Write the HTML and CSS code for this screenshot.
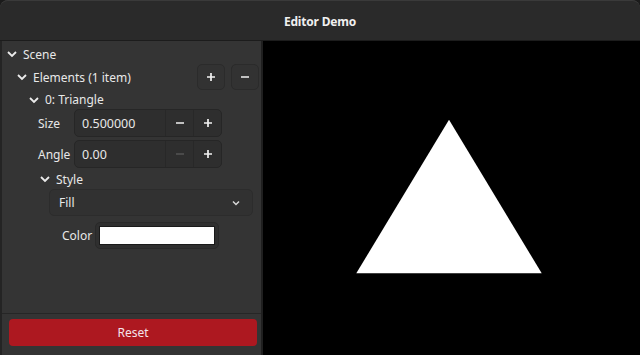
FILE: index.html
```html
<!DOCTYPE html>
<html>
<head>
<meta charset="utf-8">
<link rel="stylesheet" href="styles.css">
</head>
<body>
<div class="window">
  <header class="titlebar"><span class="title">Editor Demo</span></header>
  <main class="content">
    <aside class="sidebar">
      <div class="tree">
        <div class="row row-scene">
          <svg class="chev" viewBox="0 0 10 10"><path d="M1 3 L5 7 L9 3" /></svg>
          <span class="label">Scene</span>
        </div>
        <div class="row row-elements">
          <svg class="chev" viewBox="0 0 10 10"><path d="M1 3 L5 7 L9 3" /></svg>
          <span class="label">Elements (1 item)</span>
          <span class="spacer"></span>
          <button class="btn">
            <svg class="ic" viewBox="0 0 10 10"><path d="M5 1 V9 M1 5 H9" /></svg>
          </button>
          <button class="btn">
            <svg class="ic" viewBox="0 0 10 10"><path d="M1 5 H9" /></svg>
          </button>
        </div>
        <div class="row row-tri">
          <svg class="chev" viewBox="0 0 10 10"><path d="M1 3 L5 7 L9 3" /></svg>
          <span class="label">0: Triangle</span>
        </div>
        <div class="field row-size">
          <span class="flabel">Size</span>
          <div class="spin">
            <span class="spin-text">0.500000</span>
            <span class="spin-btn"><svg class="ic" viewBox="0 0 10 10"><path d="M1 5 H9" /></svg></span>
            <span class="spin-btn"><svg class="ic" viewBox="0 0 10 10"><path d="M5 1 V9 M1 5 H9" /></svg></span>
          </div>
        </div>
        <div class="field row-angle">
          <span class="flabel">Angle</span>
          <div class="spin">
            <span class="spin-text">0.00</span>
            <span class="spin-btn disabled"><svg class="ic" viewBox="0 0 10 10"><path d="M1 5 H9" /></svg></span>
            <span class="spin-btn"><svg class="ic" viewBox="0 0 10 10"><path d="M5 1 V9 M1 5 H9" /></svg></span>
          </div>
        </div>
        <div class="row row-style">
          <svg class="chev" viewBox="0 0 10 10"><path d="M1 3 L5 7 L9 3" /></svg>
          <span class="label">Style</span>
        </div>
        <div class="dropdown">
          <span class="dd-text">Fill</span>
          <svg class="dd-chev" viewBox="0 0 10 10"><path d="M2 3.5 L5 6.5 L8 3.5" /></svg>
        </div>
        <div class="color-row">
          <span class="flabel">Color</span>
          <div class="colorbtn"><div class="swatch"></div></div>
        </div>
      </div>
      <div class="bottom">
        <button class="reset">Reset</button>
      </div>
    </aside>
    <section class="canvas">
      <svg class="scene" viewBox="0 0 377 315">
        <polygon points="186,79 93,233 279,233" fill="#fff" />
      </svg>
    </section>
  </main>
</div>
</body>
</html>
```

FILE: styles.css
```css
html, body {
  margin: 0;
  padding: 0;
  background: #1b1b1b;
}
body {
  width: 640px;
  height: 355px;
  overflow: hidden;
  font-family: "Noto Sans", "Open Sans", sans-serif;
  font-size: 12px;
  color: #e8e8e8;
}
.window {
  width: 640px;
  height: 355px;
  display: flex;
  flex-direction: column;
  background: #282828;
  border-radius: 8px 8px 0 0;
  box-shadow: inset 0 1px 0 #3a3a3a;
  overflow: hidden;
}
.titlebar {
  height: 40px;
  flex: none;
  display: flex;
  align-items: center;
  justify-content: center;
  background: #2a2a2a;
  border-top: 1px solid #3a3a3a;
  border-radius: 8px 8px 0 0;
  box-sizing: border-box;
  padding-top: 2px;
}
.title {
  font-weight: bold;
  font-size: 12px;
  color: #f0f0f0;
  letter-spacing: -0.2px;
}
.content {
  flex: 1;
  display: flex;
  min-height: 0;
  border-top: 1px solid #1c1c1c;
}
.sidebar {
  width: 259px;
  flex: none;
  display: flex;
  flex-direction: column;
  background: #343434;
  border-left: 2px solid #242424;
  border-right: 2px solid #1f1f1f;
}
.tree {
  flex: 1;
  padding-top: 3px;
}
.row {
  display: flex;
  align-items: center;
}
.chev {
  width: 10px;
  height: 10px;
  flex: none;
  fill: none;
  stroke: #ececec;
  stroke-width: 1.8;
}
.label {
  margin-left: 6px;
}
.row-scene { height: 20px; padding-left: 5px; }
.row-elements { height: 26px; padding-left: 15px; }
.row-tri { height: 19px; padding-left: 27px; }
.row-style { height: 20px; padding-left: 38px; margin-top: 1px; }
.spacer { flex: 1; }
.btn {
  width: 28px;
  height: 26px;
  margin-left: 6px;
  padding: 0;
  display: flex;
  align-items: center;
  justify-content: center;
  background: #323232;
  border: 1px solid #2b2b2b;
  border-radius: 5px;
  box-sizing: border-box;
}
.row-elements .btn:last-child { margin-right: 2px; }
.ic {
  width: 10px;
  height: 10px;
  fill: none;
  stroke: #f2f2f2;
  stroke-width: 1.7;
}
.field {
  display: flex;
  align-items: center;
  padding-left: 36px;
  height: 28px;
}
.row-angle { margin-top: 3px; }
.flabel {
  width: 36px;
  flex: none;
}
.spin {
  width: 148px;
  height: 28px;
  display: flex;
  align-items: stretch;
  background: #2e2e2e;
  border: 1px solid #262626;
  border-radius: 5px;
  box-sizing: border-box;
}
.spin-text {
  flex: 1;
  display: flex;
  align-items: center;
  padding-left: 7px;
  font-size: 12.5px;
}
.spin-btn {
  width: 27px;
  display: flex;
  align-items: center;
  justify-content: center;
  border-left: 1px solid #282828;
}
.spin-btn.disabled .ic { stroke: #555; }
.dropdown {
  margin: 0 8px 0 47px;
  height: 27px;
  display: flex;
  align-items: center;
  padding: 0 11px 0 9px;
  background: #313131;
  border: 1px solid #2c2c2c;
  border-radius: 5px;
  box-sizing: border-box;
}
.dd-text { flex: 1; }
.dd-chev {
  width: 10px;
  height: 10px;
  fill: none;
  stroke: #d8d8d8;
  stroke-width: 1.5;
}
.color-row {
  display: flex;
  align-items: center;
  margin-top: 6px;
  padding-left: 60px;
  height: 27px;
}
.color-row .flabel { width: 33px; }
.colorbtn {
  width: 124px;
  height: 27px;
  padding: 3px;
  box-sizing: border-box;
  background: #2f2f2f;
  border: 1px solid #292929;
  border-radius: 5px;
}
.swatch {
  width: 100%;
  height: 100%;
  background: #fff;
  border: 1px solid #1a1a1a;
  box-sizing: border-box;
}
.bottom {
  height: 42px;
  flex: none;
  border-top: 1px solid #262626;
  padding: 5px 4px 0 7px;
  box-sizing: border-box;
}
.reset {
  width: 100%;
  height: 27px;
  background: #ad1820;
  color: #f4e4ea;
  border: none;
  border-radius: 4px;
  font-family: "Noto Sans", "Open Sans", sans-serif;
  font-size: 12px;
  padding: 0;
}
.canvas {
  flex: 1;
  background: #000;
}
.scene {
  display: block;
  width: 100%;
  height: 100%;
}
```
